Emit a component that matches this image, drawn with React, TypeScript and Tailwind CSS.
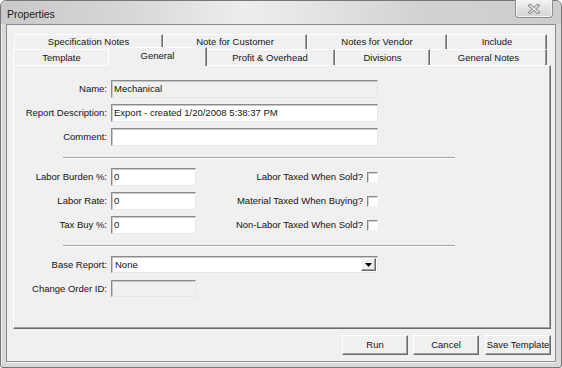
import React from "react";

function Tab({ label, w, h, selected }: { label: string; w: string; h: string; selected?: boolean }) {
  if (selected) {
    return (
      <div
        className={`relative z-10 -mx-[2px] -mb-[1px] ${w} h-[19px] flex items-center justify-center pb-[3px] bg-[#f0f0f0] border-l border-t border-white border-r border-r-[#696969] shadow-[inset_-1px_0_0_#a0a0a0] whitespace-nowrap`}
      >
        {label}
      </div>
    );
  }
  return (
    <div
      className={`${w} ${h} flex items-center justify-center bg-[#f0f0f0] border-l border-t border-white border-r border-r-[#696969] shadow-[inset_-1px_0_0_#a0a0a0] whitespace-nowrap`}
    >
      {label}
    </div>
  );
}

function TextBox({ w, h, value, disabled }: { w: string; h: string; value?: string; disabled?: boolean }) {
  return (
    <div
      className={`${w} ${h} flex items-center pl-[2px] border border-t-[#8a8a8a] border-l-[#8a8a8a] border-r-[#e6e6e6] border-b-[#e6e6e6] ${disabled ? "bg-[#f0f0f0]" : "bg-white"} shadow-[inset_1px_1px_0_#c8c8c8] whitespace-nowrap overflow-hidden`}
    >
      {value}
    </div>
  );
}

function Check() {
  return (
    <div className="w-[11px] h-[11px] border border-t-[#8a8a8a] border-l-[#8a8a8a] border-r-[#f4f4f4] border-b-[#f4f4f4] bg-white shadow-[inset_1px_1px_0_#d0d0d0]" />
  );
}

function Separator() {
  return <div className="ml-[49px] w-[392px] h-[2px] border-t border-t-[#a0a0a0] border-b border-b-white" />;
}

function Button({ label }: { label: string }) {
  return (
    <div className="w-[66px] h-[20px] flex items-center justify-center bg-[#f0f0f0] border border-t-white border-l-white border-r-[#696969] border-b-[#696969] shadow-[inset_-1px_-1px_0_#a0a0a0] whitespace-nowrap">
      {label}
    </div>
  );
}

export default function App() {
  return (
    <div className="w-[562px] h-[368px] bg-white font-['Liberation_Sans',Arial,sans-serif] text-[9.5px] text-[#141414] leading-none">
      <div className="w-[562px] h-[368px] flex flex-col rounded-t-[6px] rounded-b-[3px] border border-[#777777] bg-[#d9d9d9] shadow-[inset_1px_1px_0_#eeeeee]">
        {/* Title bar */}
        <div className="h-[23px] flex items-start justify-between rounded-t-[6px] bg-[linear-gradient(90deg,#c9c9c9_0%,#d6d6d6_22%,#eeeeee_44%,#e2e2e2_58%,#d2d2d2_75%,#cdcdcd_100%)]">
          <div className="pl-[6px] pt-[8px] text-[10.5px] text-[#1a1a1a]">Properties</div>
          <div className="-mt-[1px] mr-[8px] w-[38px] h-[18px] flex items-center justify-center rounded-b-[4px] border border-t-0 border-[#8e8e8e] bg-[linear-gradient(180deg,#f4f4f4_0%,#e2e2e2_50%,#d4d4d4_100%)] shadow-[inset_0_-1px_0_#f6f6f6,inset_1px_0_0_#f6f6f6,inset_-1px_0_0_#f6f6f6]">
            <svg width="12" height="10" viewBox="0 0 12 10">
              <path d="M2 1.5 L10 8.5 M10 1.5 L2 8.5" stroke="#8a8a8a" strokeWidth="3.2" strokeLinecap="square" />
              <path d="M2 1.5 L10 8.5 M10 1.5 L2 8.5" stroke="#f8f8f8" strokeWidth="1.2" strokeLinecap="square" />
            </svg>
          </div>
        </div>

        {/* Client area */}
        <div className="flex-1 mx-[5px] mb-[5px] border border-[#8c8c8c] bg-[#f0f0f0] flex flex-col shadow-[0_1px_0_#f4f4f4]">
          {/* Tabs */}
          <div className="ml-[6px] mt-[9px] flex flex-col">
            <div className="ml-[1px] flex h-[15px]">
              <Tab label="Specification Notes" w="w-[149px]" h="h-[15px]" />
              <Tab label="Note for Customer" w="w-[144px]" h="h-[15px]" />
              <Tab label="Notes for Vendor" w="w-[140px]" h="h-[15px]" />
              <Tab label="Include" w="w-[100px]" h="h-[15px]" />
            </div>
            <div className="flex items-end h-[16px]">
              <Tab label="Template" w="w-[97px]" h="h-[16px]" />
              <Tab label="General" w="w-[99px]" h="h-[19px]" selected />
              <Tab label="Profit & Overhead" w="w-[130px]" h="h-[16px]" />
              <Tab label="Divisions" w="w-[95px]" h="h-[16px]" />
              <Tab label="General Notes" w="w-[117px]" h="h-[16px]" />
            </div>
            {/* Panel */}
            <div className="w-[538px] h-[264px] border border-t-white border-l-white border-r-[#696969] border-b-[#696969] shadow-[inset_-1px_-1px_0_#a0a0a0] flex flex-col">
              <div className="flex flex-col gap-[6px] pt-[14px]">
                <div className="flex items-center">
                  <div className="w-[93px] text-right">Name:</div>
                  <div className="ml-[4px]"><TextBox w="w-[267px]" h="h-[18px]" value="Mechanical" disabled /></div>
                </div>
                <div className="flex items-center">
                  <div className="w-[93px] text-right">Report Description:</div>
                  <div className="ml-[4px]"><TextBox w="w-[267px]" h="h-[18px]" value="Export - created 1/20/2008 5:38:37 PM" /></div>
                </div>
                <div className="flex items-center">
                  <div className="w-[93px] text-right">Comment:</div>
                  <div className="ml-[4px]"><TextBox w="w-[267px]" h="h-[18px]" /></div>
                </div>
              </div>

              <div className="mt-[11px]"><Separator /></div>

              <div className="flex flex-col gap-[6px] pt-[9px]">
                {[
                  ["Labor Burden %:", "Labor Taxed When Sold?"],
                  ["Labor Rate:", "Material Taxed When Buying?"],
                  ["Tax Buy %:", "Non-Labor Taxed When Sold?"],
                ].map(([l, c]) => (
                  <div key={l} className="w-[364px] flex items-center">
                    <div className="w-[93px] text-right">{l}</div>
                    <div className="ml-[4px]"><TextBox w="w-[85px]" h="h-[18px]" value="0" /></div>
                    <div className="flex-1 flex items-center justify-end gap-[4px]">
                      <span className="whitespace-nowrap">{c}</span>
                      <Check />
                    </div>
                  </div>
                ))}
              </div>

              <div className="mt-[11px]"><Separator /></div>

              <div className="flex flex-col gap-[7px] pt-[9px]">
                <div className="flex items-center">
                  <div className="w-[93px] text-right">Base Report:</div>
                  <div className="ml-[4px] w-[267px] h-[17px] flex items-center border border-t-[#8a8a8a] border-l-[#8a8a8a] border-r-[#e6e6e6] border-b-[#e6e6e6] bg-white shadow-[inset_1px_1px_0_#c8c8c8]">
                    <div className="flex-1 pl-[3px]">None</div>
                    <div className="w-[15px] h-[13px] mr-[1px] flex items-center justify-center bg-[#f0f0f0] border border-t-white border-l-white border-r-[#696969] border-b-[#696969] shadow-[inset_-1px_-1px_0_#a0a0a0]">
                      <svg width="7" height="4" viewBox="0 0 7 4">
                        <path d="M0 0 H7 L3.5 4 Z" fill="#000" />
                      </svg>
                    </div>
                  </div>
                </div>
                <div className="flex items-center">
                  <div className="w-[93px] text-right">Change Order ID:</div>
                  <div className="ml-[4px]"><TextBox w="w-[85px]" h="h-[17px]" disabled /></div>
                </div>
              </div>
            </div>
          </div>

          {/* Buttons */}
          <div className="mt-[6px] flex justify-end pr-[4px]">
            <Button label="Run" />
            <div className="ml-[5px]"><Button label="Cancel" /></div>
            <div className="ml-[6px]"><Button label="Save Template" /></div>
          </div>
        </div>
      </div>
    </div>
  );
}
